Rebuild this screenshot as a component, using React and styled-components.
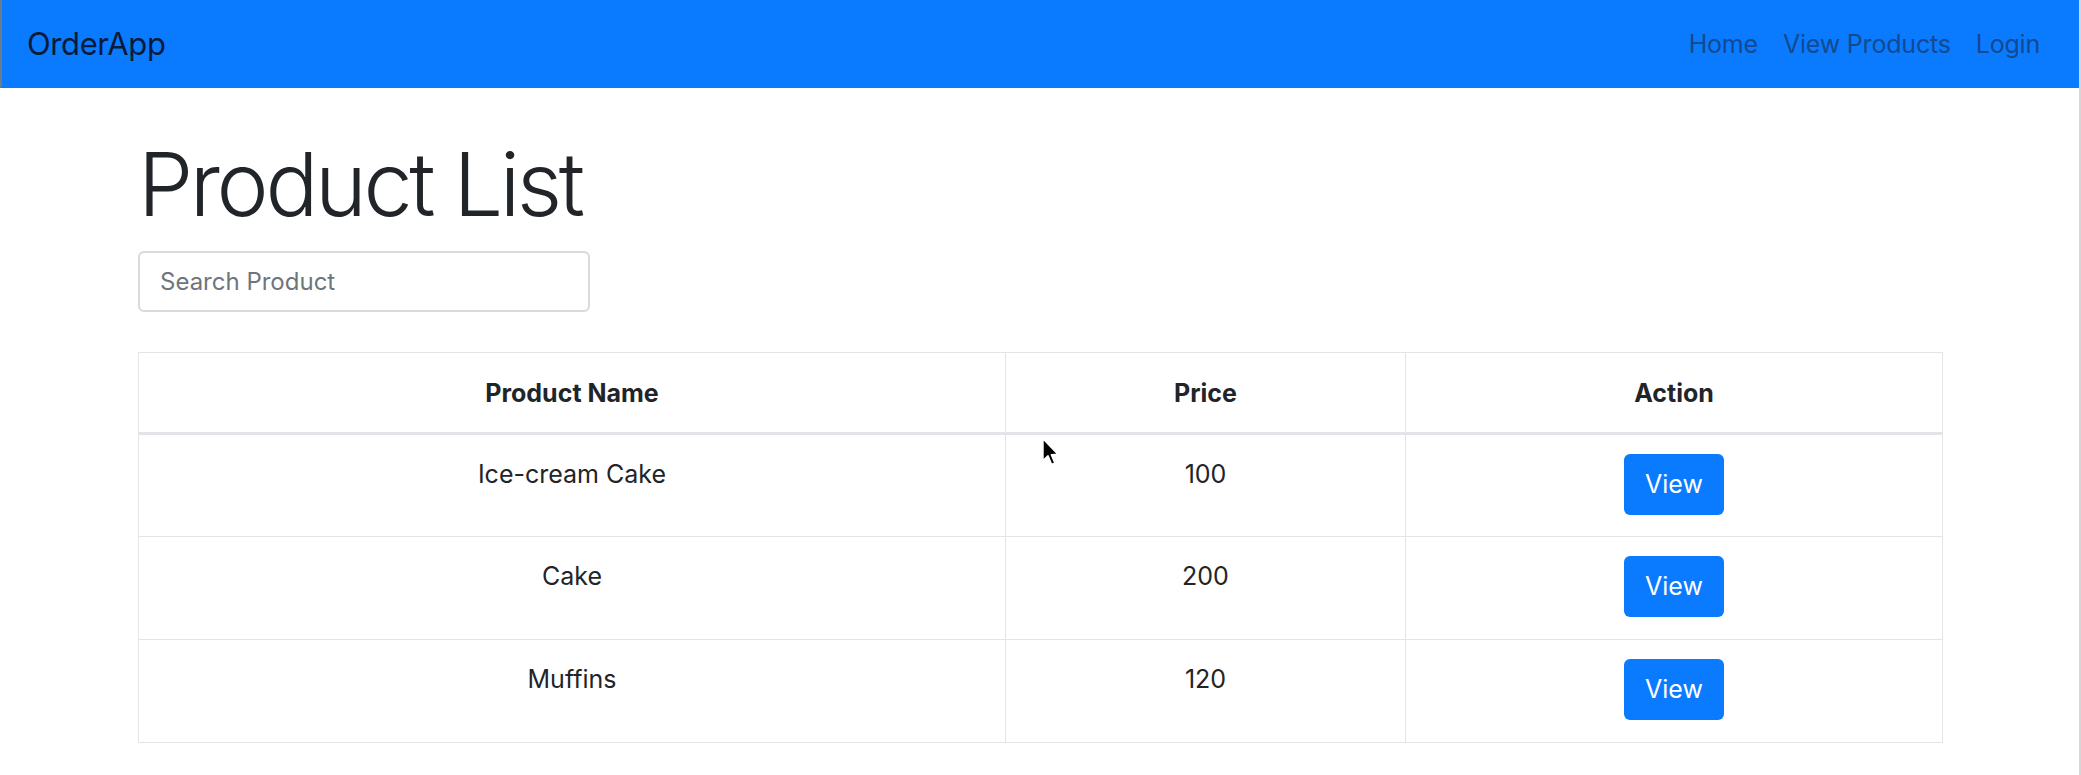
import React, { useState } from "react";
import styled, { createGlobalStyle } from "styled-components";

const products = [
  { id: 1, name: "Ice-cream Cake", price: 100 },
  { id: 2, name: "Cake", price: 200 },
  { id: 3, name: "Muffins", price: 120 },
];

function App() {
  const [query, setQuery] = useState("");
  const shown = products.filter((p) =>
    p.name.toLowerCase().includes(query.toLowerCase())
  );
  return (
    <Page>
      <GlobalStyle />
      <Navbar>
        <Brand href="#">OrderApp</Brand>
        <NavLinks>
          <NavLink href="#">Home</NavLink>
          <NavLink href="#">View Products</NavLink>
          <NavLink href="#">Login</NavLink>
        </NavLinks>
      </Navbar>
      <Container>
        <Title>Product List</Title>
        <SearchInput
          placeholder="Search Product"
          value={query}
          onChange={(e) => setQuery(e.target.value)}
        />
        <Table>
          <colgroup>
            <col style={{ width: "867px" }} />
            <col style={{ width: "400px" }} />
            <col style={{ width: "537px" }} />
          </colgroup>
          <thead>
            <tr>
              <Th>Product Name</Th>
              <Th>Price</Th>
              <Th>Action</Th>
            </tr>
          </thead>
          <tbody>
            {shown.map((p) => (
              <tr key={p.id}>
                <Td>{p.name}</Td>
                <Td>{p.price}</Td>
                <Td>
                  <ViewButton>View</ViewButton>
                </Td>
              </tr>
            ))}
          </tbody>
        </Table>
      </Container>
      <Cursor width="20" height="30" viewBox="0 0 18 28">
        <path
          d="M1.5 1.5 L1.5 22 L6.2 17.6 L9.6 25.6 L12.6 24.3 L9.3 16.5 L15.6 16.2 Z"
          fill="#000"
          stroke="#fff"
          strokeWidth="1.4"
          strokeLinejoin="round"
        />
      </Cursor>
    </Page>
  );
}

export default App;

const GlobalStyle = createGlobalStyle`
  html, body {
    margin: 0;
    padding: 0;
    background: #fff;
  }
  body {
    font-family: Inter, "Liberation Sans", sans-serif;
    color: #212529;
  }
  * {
    box-sizing: border-box;
  }
`;

const Page = styled.div`
  position: relative;
  width: 2081px;
  height: 775px;
  overflow: hidden;
  border-right: 2px solid #d6d6d6;
`;

const Navbar = styled.nav`
  height: 88px;
  background: #0a7bff;
  border-left: 2px solid #6b7a8c;
  border-bottom: 1px solid #2f6fc4;
  display: flex;
  align-items: center;
  justify-content: space-between;
  padding: 0 39px 0 25px;
`;

const Brand = styled.a`
  font-size: 31px;
  color: #081a38;
  text-decoration: none;
  letter-spacing: -0.4px;
`;

const NavLinks = styled.div`
  display: flex;
  gap: 25px;
`;

const NavLink = styled.a`
  font-size: 25px;
  color: #124990;
  text-decoration: none;
  letter-spacing: -0.2px;
`;

const Container = styled.main`
  padding: 44px 0 0 138px;
  width: 1942px;
`;

const Title = styled.h1`
  margin: 0 0 13px 0;
  font-size: 88px;
  font-weight: 300;
  line-height: 1.2;
  letter-spacing: -3.4px;
  color: #212529;
`;

const SearchInput = styled.input`
  display: block;
  width: 452px;
  height: 61px;
  padding: 0 20px;
  font-family: inherit;
  font-size: 24px;
  color: #495057;
  border: 2px solid #d6dade;
  border-radius: 6px;
  outline: none;
  margin-bottom: 40px;
  &::placeholder {
    color: #6e757d;
  }
`;

const Table = styled.table`
  width: 1804px;
  table-layout: fixed;
  border-collapse: collapse;
  font-size: 25px;
`;

const Th = styled.th`
  height: 81px;
  text-align: center;
  vertical-align: middle;
  font-weight: 700;
  color: #212529;
  border: 1.5px solid #e2e4e7;
  border-bottom: 3px solid #e2e4e7;
  padding: 2px 19px 0;
`;

const Td = styled.td`
  height: 103px;
  text-align: center;
  vertical-align: top;
  padding: 21px 19px 17px;
  line-height: 1.5;
  color: #212529;
  border: 1.5px solid #e2e4e7;
`;

const ViewButton = styled.button`
  width: 100px;
  height: 61px;
  margin-top: -2px;
  border: none;
  border-radius: 6px;
  background: #0a7bff;
  color: #fff;
  font-family: inherit;
  font-size: 25px;
  cursor: pointer;
`;

const Cursor = styled.svg`
  position: absolute;
  left: 1041px;
  top: 437px;
  pointer-events: none;
`;
